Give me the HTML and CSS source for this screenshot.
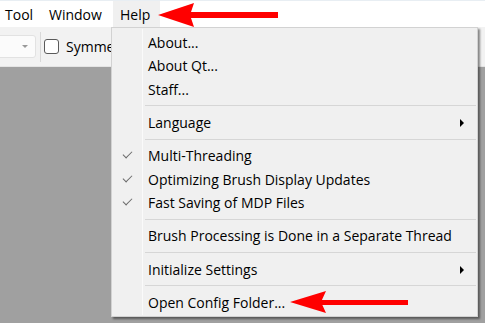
FILE: index.html
```html
<!DOCTYPE html>
<html lang="en">
<head>
    <meta charset="UTF-8">
    <title>Help menu</title>
    <link rel="stylesheet" href="styles.css">
</head>
<body>
    <div class="window">
        <nav class="menubar">
            <span class="menubar-item">Tool</span>
            <span class="menubar-item">Window</span>
            <span class="menubar-item active">Help</span>
        </nav>
        <div class="toolbar">
            <div class="combo"><span class="combo-arrow"></span></div>
            <div class="tool-sep"></div>
            <span class="checkbox"></span>
            <span class="tool-label">Symmetry</span>
        </div>
        <div class="canvas"></div>

        <div class="popup">
            <div class="item">About...</div>
            <div class="item">About Qt...</div>
            <div class="item">Staff...</div>
            <div class="sep"></div>
            <div class="item sub">Language</div>
            <div class="sep"></div>
            <div class="item checked">Multi-Threading</div>
            <div class="item checked">Optimizing Brush Display Updates</div>
            <div class="item checked">Fast Saving of MDP Files</div>
            <div class="sep"></div>
            <div class="item">Brush Processing is Done in a Separate Thread</div>
            <div class="sep"></div>
            <div class="item sub">Initialize Settings</div>
            <div class="sep"></div>
            <div class="item">Open Config Folder...</div>
        </div>

        <!-- annotation arrows -->
        <svg class="arrow arrow-top" width="130" height="30" viewBox="0 0 130 30">
            <rect x="30" y="12" width="90" height="6" fill="#f00"/>
            <polygon points="0,15 36,3 32,15 36,27" fill="#f00"/>
        </svg>
        <svg class="arrow arrow-bottom" width="125" height="26" viewBox="0 0 125 26">
            <rect x="28" y="10" width="90" height="5" fill="#f00"/>
            <polygon points="0,12 36,1 31,12 36,23" fill="#f00"/>
        </svg>
    </div>
</body>
</html>
```

FILE: styles.css
```css
body {
    margin: 0;
    font-family: "Open Sans", "Noto Sans", sans-serif;
    font-size: 14px;
    color: #000;
    background: #a0a0a0;
}
.window {
    position: relative;
    width: 485px;
    height: 323px;
    overflow: hidden;
}
.menubar {
    display: flex;
    height: 27px;
    padding-left: 5px;
    background: #fff;
    border-top: 1px solid #e8eef3;
    box-sizing: border-box;
}
.menubar-item {
    display: flex;
    align-items: center;
    font-size: 14px;
}
.menubar-item:first-child {
    width: 44px;
}
.menubar-item:nth-child(2) {
    width: 64px;
}
.menubar-item.active {
    width: 40px;
    padding-left: 7px;
    background: #f0f0f0;
}
.toolbar {
    display: flex;
    align-items: center;
    height: 40px;
    background: #f2f2f2;
    border-bottom: 1px solid #e4e4e4;
    box-sizing: border-box;
}
.combo {
    position: relative;
    width: 40px;
    height: 21px;
    margin-left: -6px;
    background: #fbfbfb;
    border: 1px solid #e2e2e2;
    border-radius: 3px;
}
.combo-arrow {
    position: absolute;
    left: 27px;
    top: 9px;
    border-left: 3px solid transparent;
    border-right: 3px solid transparent;
    border-top: 3px solid #999;
}
.tool-sep {
    width: 1px;
    height: 30px;
    margin: 0 3px 0 4px;
    background: #d8d8d8;
}
.checkbox {
    width: 13px;
    height: 13px;
    border: 1px solid #5a5a5a;
    border-radius: 3px;
    background: #fff;
}
.tool-label {
    margin-left: 7px;
    font-size: 14px;
}
.canvas {
    height: 256px;
    background: #a0a0a0;
}
.popup {
    position: absolute;
    left: 111px;
    top: 27px;
    width: 365px;
    padding: 3px 0 2px;
    background: #f0f0f0;
    border: 1px solid #d2d2d2;
    box-shadow: 2px 2px 2px rgba(0, 0, 0, 0.45);
}
.popup::before {
    content: '';
    position: absolute;
    left: 30px;
    top: 1px;
    bottom: 1px;
    width: 1px;
    background: #fafafa;
}
.item {
    position: relative;
    height: 23.33px;
    line-height: 23px;
    padding-left: 36px;
    font-size: 14px;
    white-space: nowrap;
}
.item.checked::before {
    content: '';
    position: absolute;
    left: 11px;
    top: 7px;
    width: 8px;
    height: 4px;
    border-left: 1px solid #6a6a6a;
    border-bottom: 1px solid #6a6a6a;
    transform: rotate(-45deg);
}
.item.sub::after {
    content: '';
    position: absolute;
    left: 348px;
    top: 8px;
    border-top: 4px solid transparent;
    border-bottom: 4px solid transparent;
    border-left: 4px solid #000;
}
.sep {
    height: 10px;
    margin-left: 33px;
    margin-right: 1px;
    background: linear-gradient(#d6d6d6, #d6d6d6) center / 100% 1px no-repeat;
}
.arrow {
    position: absolute;
}
.arrow-top {
    left: 158px;
    top: 0;
}
.arrow-bottom {
    left: 290px;
    top: 290px;
}
```
